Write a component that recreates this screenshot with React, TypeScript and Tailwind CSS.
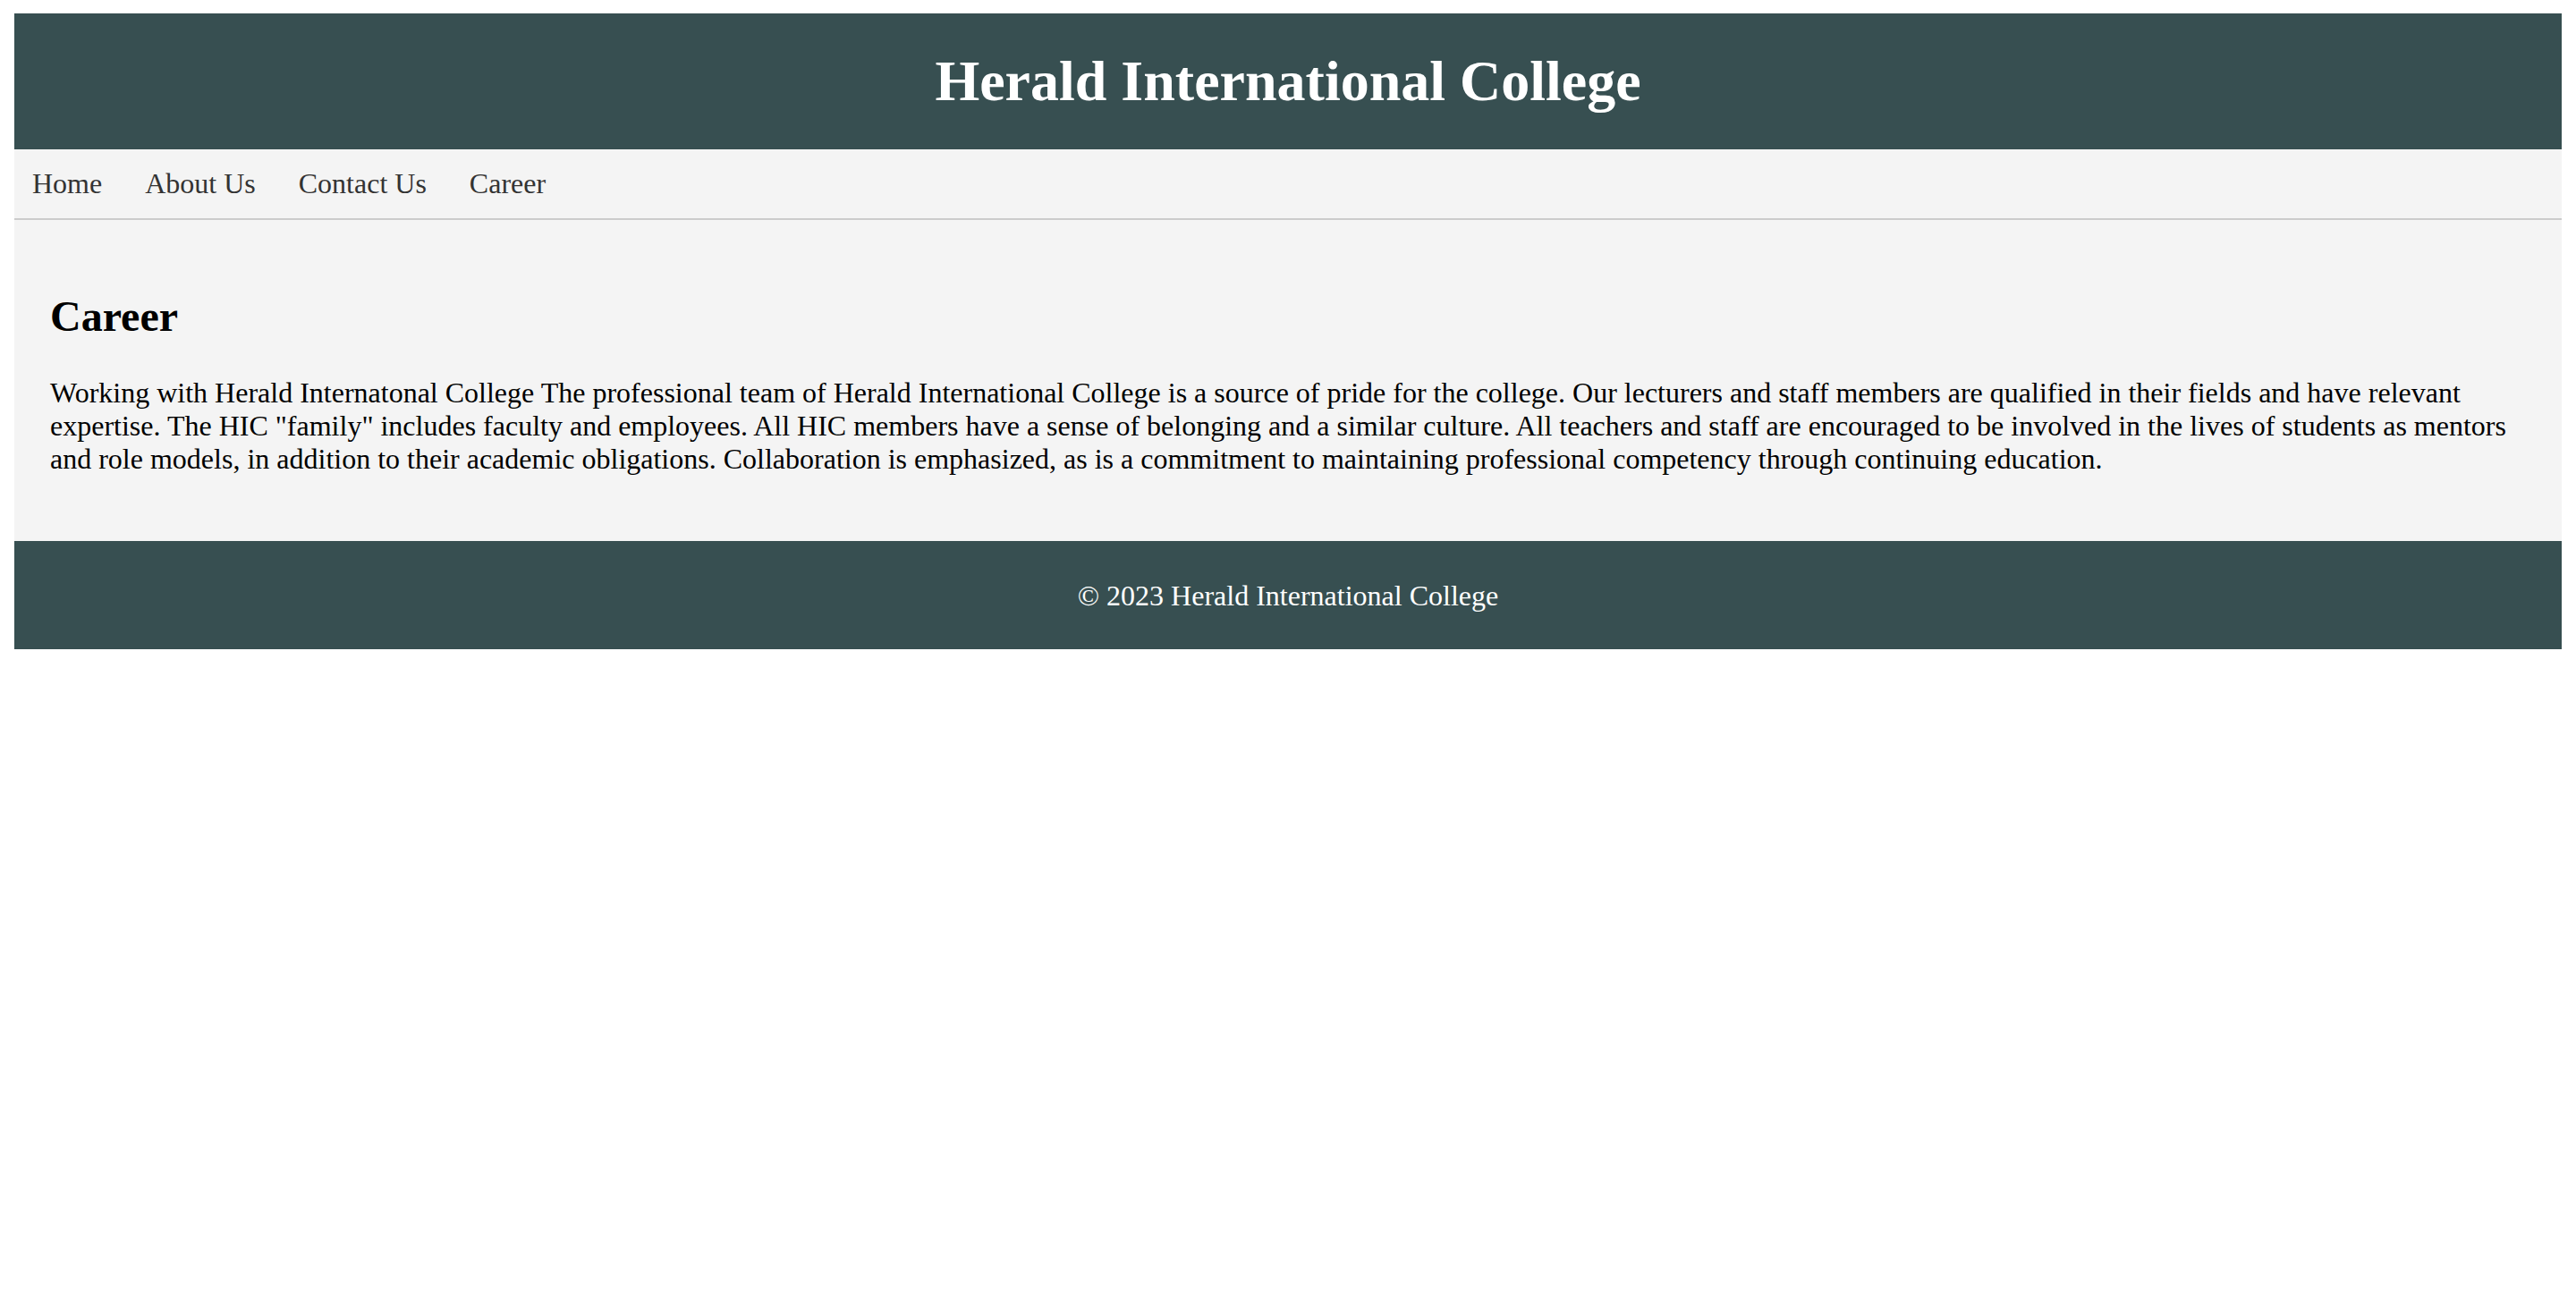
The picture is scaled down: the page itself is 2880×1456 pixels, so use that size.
export default function App() {
  const links = ["Home", "About Us", "Contact Us", "Career"];

  return (
    <div
      className="min-h-screen bg-white px-4 pt-[15px] text-[32px] text-black"
      style={{ fontFamily: '"Liberation Serif", "Times New Roman", serif' }}
    >
      <header className="flex h-[152px] items-center justify-center bg-[#374f51]">
        <h1 className="text-[64px] font-bold leading-[1.15] text-white">
          Herald International College
        </h1>
      </header>

      <nav className="flex border-b-2 border-[#cccccc] bg-[#f4f4f4]">
        {links.map((link) => (
          <a
            key={link}
            href="#"
            className="mr-2 px-5 py-5 leading-[1.15] text-[#333333]"
          >
            {link}
          </a>
        ))}
      </nav>

      <main className="bg-[#f4f4f4] px-10 pt-10 pb-[42px]">
        <h2 className="mt-10 mb-10 text-[48px] font-bold leading-[1.15]">
          Career
        </h2>
        <p className="mb-8 leading-[1.15]">
          Working with Herald Internatonal College The professional team of
          Herald International College is a source of pride for the college.
          Our lecturers and staff members are qualified in their fields and
          have relevant expertise. The HIC "family" includes faculty and
          employees. All HIC members have a sense of belonging and a similar
          culture. All teachers and staff are encouraged to be involved in the
          lives of students as mentors and role models, in addition to their
          academic obligations. Collaboration is emphasized, as is a
          commitment to maintaining professional competency through
          continuing education.
        </p>
      </main>

      <footer className="flex h-[121px] items-center justify-center bg-[#374f51] text-white">
        <p>© 2023 Herald International College</p>
      </footer>
    </div>
  );
}
